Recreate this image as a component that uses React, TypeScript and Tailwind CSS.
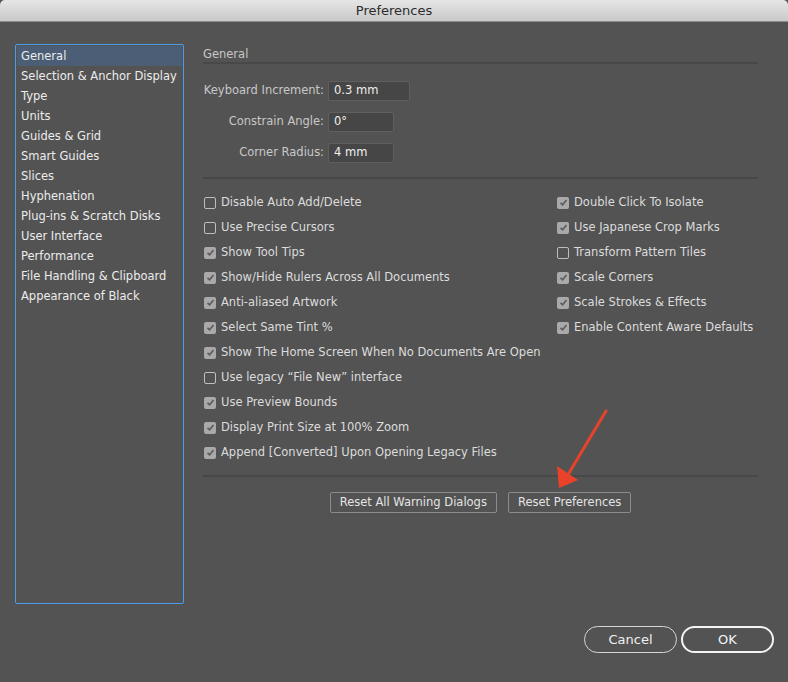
import React from 'react';

const sections = [
  'General',
  'Selection & Anchor Display',
  'Type',
  'Units',
  'Guides & Grid',
  'Smart Guides',
  'Slices',
  'Hyphenation',
  'Plug-ins & Scratch Disks',
  'User Interface',
  'Performance',
  'File Handling & Clipboard',
  'Appearance of Black',
];

const leftOptions: [string, boolean][] = [
  ['Disable Auto Add/Delete', false],
  ['Use Precise Cursors', false],
  ['Show Tool Tips', true],
  ['Show/Hide Rulers Across All Documents', true],
  ['Anti-aliased Artwork', true],
  ['Select Same Tint %', true],
  ['Show The Home Screen When No Documents Are Open', true],
  ['Use legacy \u201cFile New\u201d interface', false],
  ['Use Preview Bounds', true],
  ['Display Print Size at 100% Zoom', true],
  ['Append [Converted] Upon Opening Legacy Files', true],
];

const rightOptions: [string, boolean][] = [
  ['Double Click To Isolate', true],
  ['Use Japanese Crop Marks', true],
  ['Transform Pattern Tiles', false],
  ['Scale Corners', true],
  ['Scale Strokes & Effects', true],
  ['Enable Content Aware Defaults', true],
];

function Check({ label, checked }: { label: string; checked: boolean }) {
  return (
    <div className="flex items-center h-[25px] gap-[5px] whitespace-nowrap">
      {checked ? (
        <span className="w-3 h-3 shrink-0 rounded-[2px] bg-[#a9a9a9] flex items-center justify-center">
          <svg width="9" height="9" viewBox="0 0 9 9">
            <path d="M1.5 4.8 L3.6 6.8 L7.5 2" fill="none" stroke="#5b5b5b" strokeWidth="1.6" />
          </svg>
        </span>
      ) : (
        <span className="w-3 h-3 shrink-0 rounded-[2px] border border-[#bdbdbd]" />
      )}
      <span className="text-[#dcdcdc]">{label}</span>
    </div>
  );
}

function Field({ label, value, width }: { label: string; value: string; width: string }) {
  return (
    <div className="flex items-center h-[20px] whitespace-nowrap">
      <span className="w-[125px] shrink-0 text-right pr-[4px] text-[#c8c8c8]">{label}</span>
      <div className={`${width} h-[20px] bg-[#464646] border border-[#5f5f5f] rounded-[2px] px-[5px] flex items-center text-[#f0f0f0]`}>
        {value}
      </div>
    </div>
  );
}

export default function App() {
  return (
    <div
      className="relative w-[788px] h-[682px] bg-[#535353] overflow-hidden text-[11.5px]"
      style={{ fontFamily: '"DejaVu Sans", "Noto Sans", sans-serif' }}
    >
      {/* title bar */}
      <div className="h-[22px] rounded-t-[5px] bg-gradient-to-b from-[#e6e6e6] to-[#c9c9c9] border-b border-[#8d8d8d] flex items-center justify-center text-[13px] text-[#2b2b2b]">
        Preferences
      </div>

      <div className="flex pt-[22px]">
        {/* sidebar */}
        <div className="ml-[15px] w-[169px] h-[560px] border border-[#4a9cec] rounded-[2px] p-[1px]">
          {sections.map((s, i) => (
            <div
              key={s}
              className={`h-[20px] pl-[4px] pt-[1px] flex items-center whitespace-nowrap text-[#ececec] ${i === 0 ? 'bg-[#4b5e75]' : ''}`}
            >
              {s}
            </div>
          ))}
        </div>

        {/* main */}
        <div className="ml-[19px] w-[555px] flex flex-col">
          <div className="text-[#c8c8c8] pt-[3px] leading-[14px] pb-[1px]">General</div>
          <div className="h-[2px] bg-[#484848]" />

          <div className="flex flex-col gap-[11px] mt-[17px]">
            <Field label="Keyboard Increment:" value="0.3 mm" width="w-[82px]" />
            <Field label="Constrain Angle:" value="0°" width="w-[66px]" />
            <Field label="Corner Radius:" value="4 mm" width="w-[66px]" />
          </div>

          <div className="h-[2px] bg-[#484848] mt-[14px]" />

          <div className="flex mt-[11px] pl-[1px]">
            <div className="w-[353px] flex flex-col">
              {leftOptions.map(([l, c]) => (
                <Check key={l} label={l} checked={c} />
              ))}
            </div>
            <div className="flex flex-col">
              {rightOptions.map(([l, c]) => (
                <Check key={l} label={l} checked={c} />
              ))}
            </div>
          </div>

          <div className="h-[2px] bg-[#484848] mt-[10px]" />

          <div className="flex justify-center gap-[11px] mt-[15px]">
            <button className="h-[21px] px-[9px] border border-[#8c8c8c] rounded-[2px] text-[#e4e4e4] whitespace-nowrap">
              Reset All Warning Dialogs
            </button>
            <button className="h-[21px] px-[9px] border border-[#8c8c8c] rounded-[2px] text-[#e4e4e4] whitespace-nowrap">
              Reset Preferences
            </button>
          </div>
        </div>
      </div>

      {/* dialog buttons */}
      <div className="absolute right-[14px] bottom-[29px] flex gap-[4px]">
        <button className="w-[93px] h-[27px] rounded-full border border-[#d6d6d6] text-[#f0f0f0] text-[13px]">
          Cancel
        </button>
        <button className="w-[93px] h-[27px] rounded-full border-2 border-[#f4f4f4] text-[#f6f6f6] text-[13px]">
          OK
        </button>
      </div>

      {/* annotation arrow */}
      <svg className="absolute left-0 top-0 pointer-events-none" width="788" height="682">
        <line x1="606" y1="411" x2="566" y2="478" stroke="#e8432a" strokeWidth="3" strokeLinecap="round" />
        <path d="M559 488 L557 466 L569 474 L578 480 Z" fill="#e8432a" />
      </svg>
    </div>
  );
}
